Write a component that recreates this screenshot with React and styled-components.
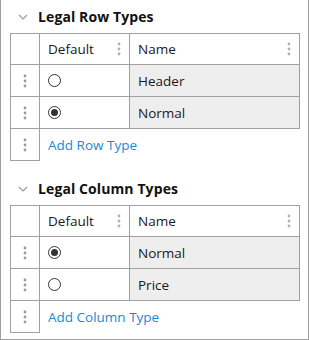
import { Fragment } from "react";
import styled, { createGlobalStyle } from "styled-components";

const GlobalStyle = createGlobalStyle`
  html, body {
    margin: 0;
    padding: 0;
    background: #ffffff;
  }
  body {
    font-family: "Open Sans", "Noto Sans", sans-serif;
    color: #1a1a1a;
  }
`;

const Panel = styled.div`
  width: 309px;
  height: 340px;
  box-sizing: border-box;
  border: 1px solid #a0a0a0;
  border-top: none;
  padding: 0 9px;
  display: flex;
  flex-direction: column;
  gap: 11px;
`;

const Section = styled.section`
  display: flex;
  flex-direction: column;
`;

const SectionHeader = styled.div`
  height: 33px;
  display: flex;
  align-items: center;
  gap: 10px;
  padding-left: 8px;
  box-sizing: border-box;
`;

const Title = styled.h3`
  margin: 0;
  font-size: 14px;
  font-weight: 700;
  color: #111;
  letter-spacing: 0.1px;
`;

const Table = styled.div`
  display: grid;
  grid-template-columns: 30px 90px 170px;
`;

const Cell = styled.div`
  height: 32px;
  box-sizing: border-box;
  display: flex;
  align-items: center;
  justify-content: ${(p) => (p.$center ? "center" : "space-between")};
  padding: ${(p) => (p.$center ? "0" : "0 8px 0 8px")};
  border-right: 1px solid #a0a0a0;
  border-bottom: 1px solid #a0a0a0;
  border-left: ${(p) => (p.$first ? "1px solid #a0a0a0" : "none")};
  border-top: ${(p) => (p.$top ? "1px solid #a0a0a0" : "none")};
  background: ${(p) => (p.$shaded ? "#eeeeee" : "#ffffff")};
  font-size: 13.5px;
  color: #1a1a1a;
`;

const AddCell = styled.div`
  grid-column: 2 / span 2;
  height: 32px;
  display: flex;
  align-items: center;
  padding-left: 8px;
  font-size: 13.5px;
  color: #1a8ad4;
  cursor: pointer;
`;

const Radio = styled.span`
  width: 11px;
  height: 11px;
  border-radius: 50%;
  border: 1px solid #333;
  background: #fff;
  display: flex;
  align-items: center;
  justify-content: center;

  &::after {
    content: "";
    width: 7px;
    height: 7px;
    border-radius: 50%;
    background: ${(p) => (p.$checked ? "#333" : "transparent")};
  }
`;

const Chevron = () => (
  <svg width="10" height="6" viewBox="0 0 10 6">
    <path d="M1 1 L5 5 L9 1" fill="none" stroke="#9a9a9a" strokeWidth="1.2" />
  </svg>
);

const Dots = ({ color = "#9a9a9a" }) => (
  <svg width="4" height="14" viewBox="0 0 4 14">
    <circle cx="2" cy="2" r="1.4" fill={color} />
    <circle cx="2" cy="7" r="1.4" fill={color} />
    <circle cx="2" cy="12" r="1.4" fill={color} />
  </svg>
);

const TypeTable = ({ title, rows, addLabel }) => (
  <Section>
    <SectionHeader>
      <Chevron />
      <Title>{title}</Title>
    </SectionHeader>
    <Table>
      <Cell $first $top $center />
      <Cell $top>
        Default
        <Dots color="#b0b0b0" />
      </Cell>
      <Cell $top>
        Name
        <Dots color="#b0b0b0" />
      </Cell>
      {rows.map((r) => (
        <Fragment key={r.name}>
          <Cell $first $center>
            <Dots />
          </Cell>
          <Cell>
            <Radio $checked={r.checked} />
          </Cell>
          <Cell $shaded>{r.name}</Cell>
        </Fragment>
      ))}
      <Cell $first $center>
        <Dots />
      </Cell>
      <AddCell>{addLabel}</AddCell>
    </Table>
  </Section>
);

export default function App() {
  return (
    <>
      <GlobalStyle />
      <Panel>
        <TypeTable
          title="Legal Row Types"
          addLabel="Add Row Type"
          rows={[
            { name: "Header", checked: false },
            { name: "Normal", checked: true },
          ]}
        />
        <TypeTable
          title="Legal Column Types"
          addLabel="Add Column Type"
          rows={[
            { name: "Normal", checked: true },
            { name: "Price", checked: false },
          ]}
        />
      </Panel>
    </>
  );
}
